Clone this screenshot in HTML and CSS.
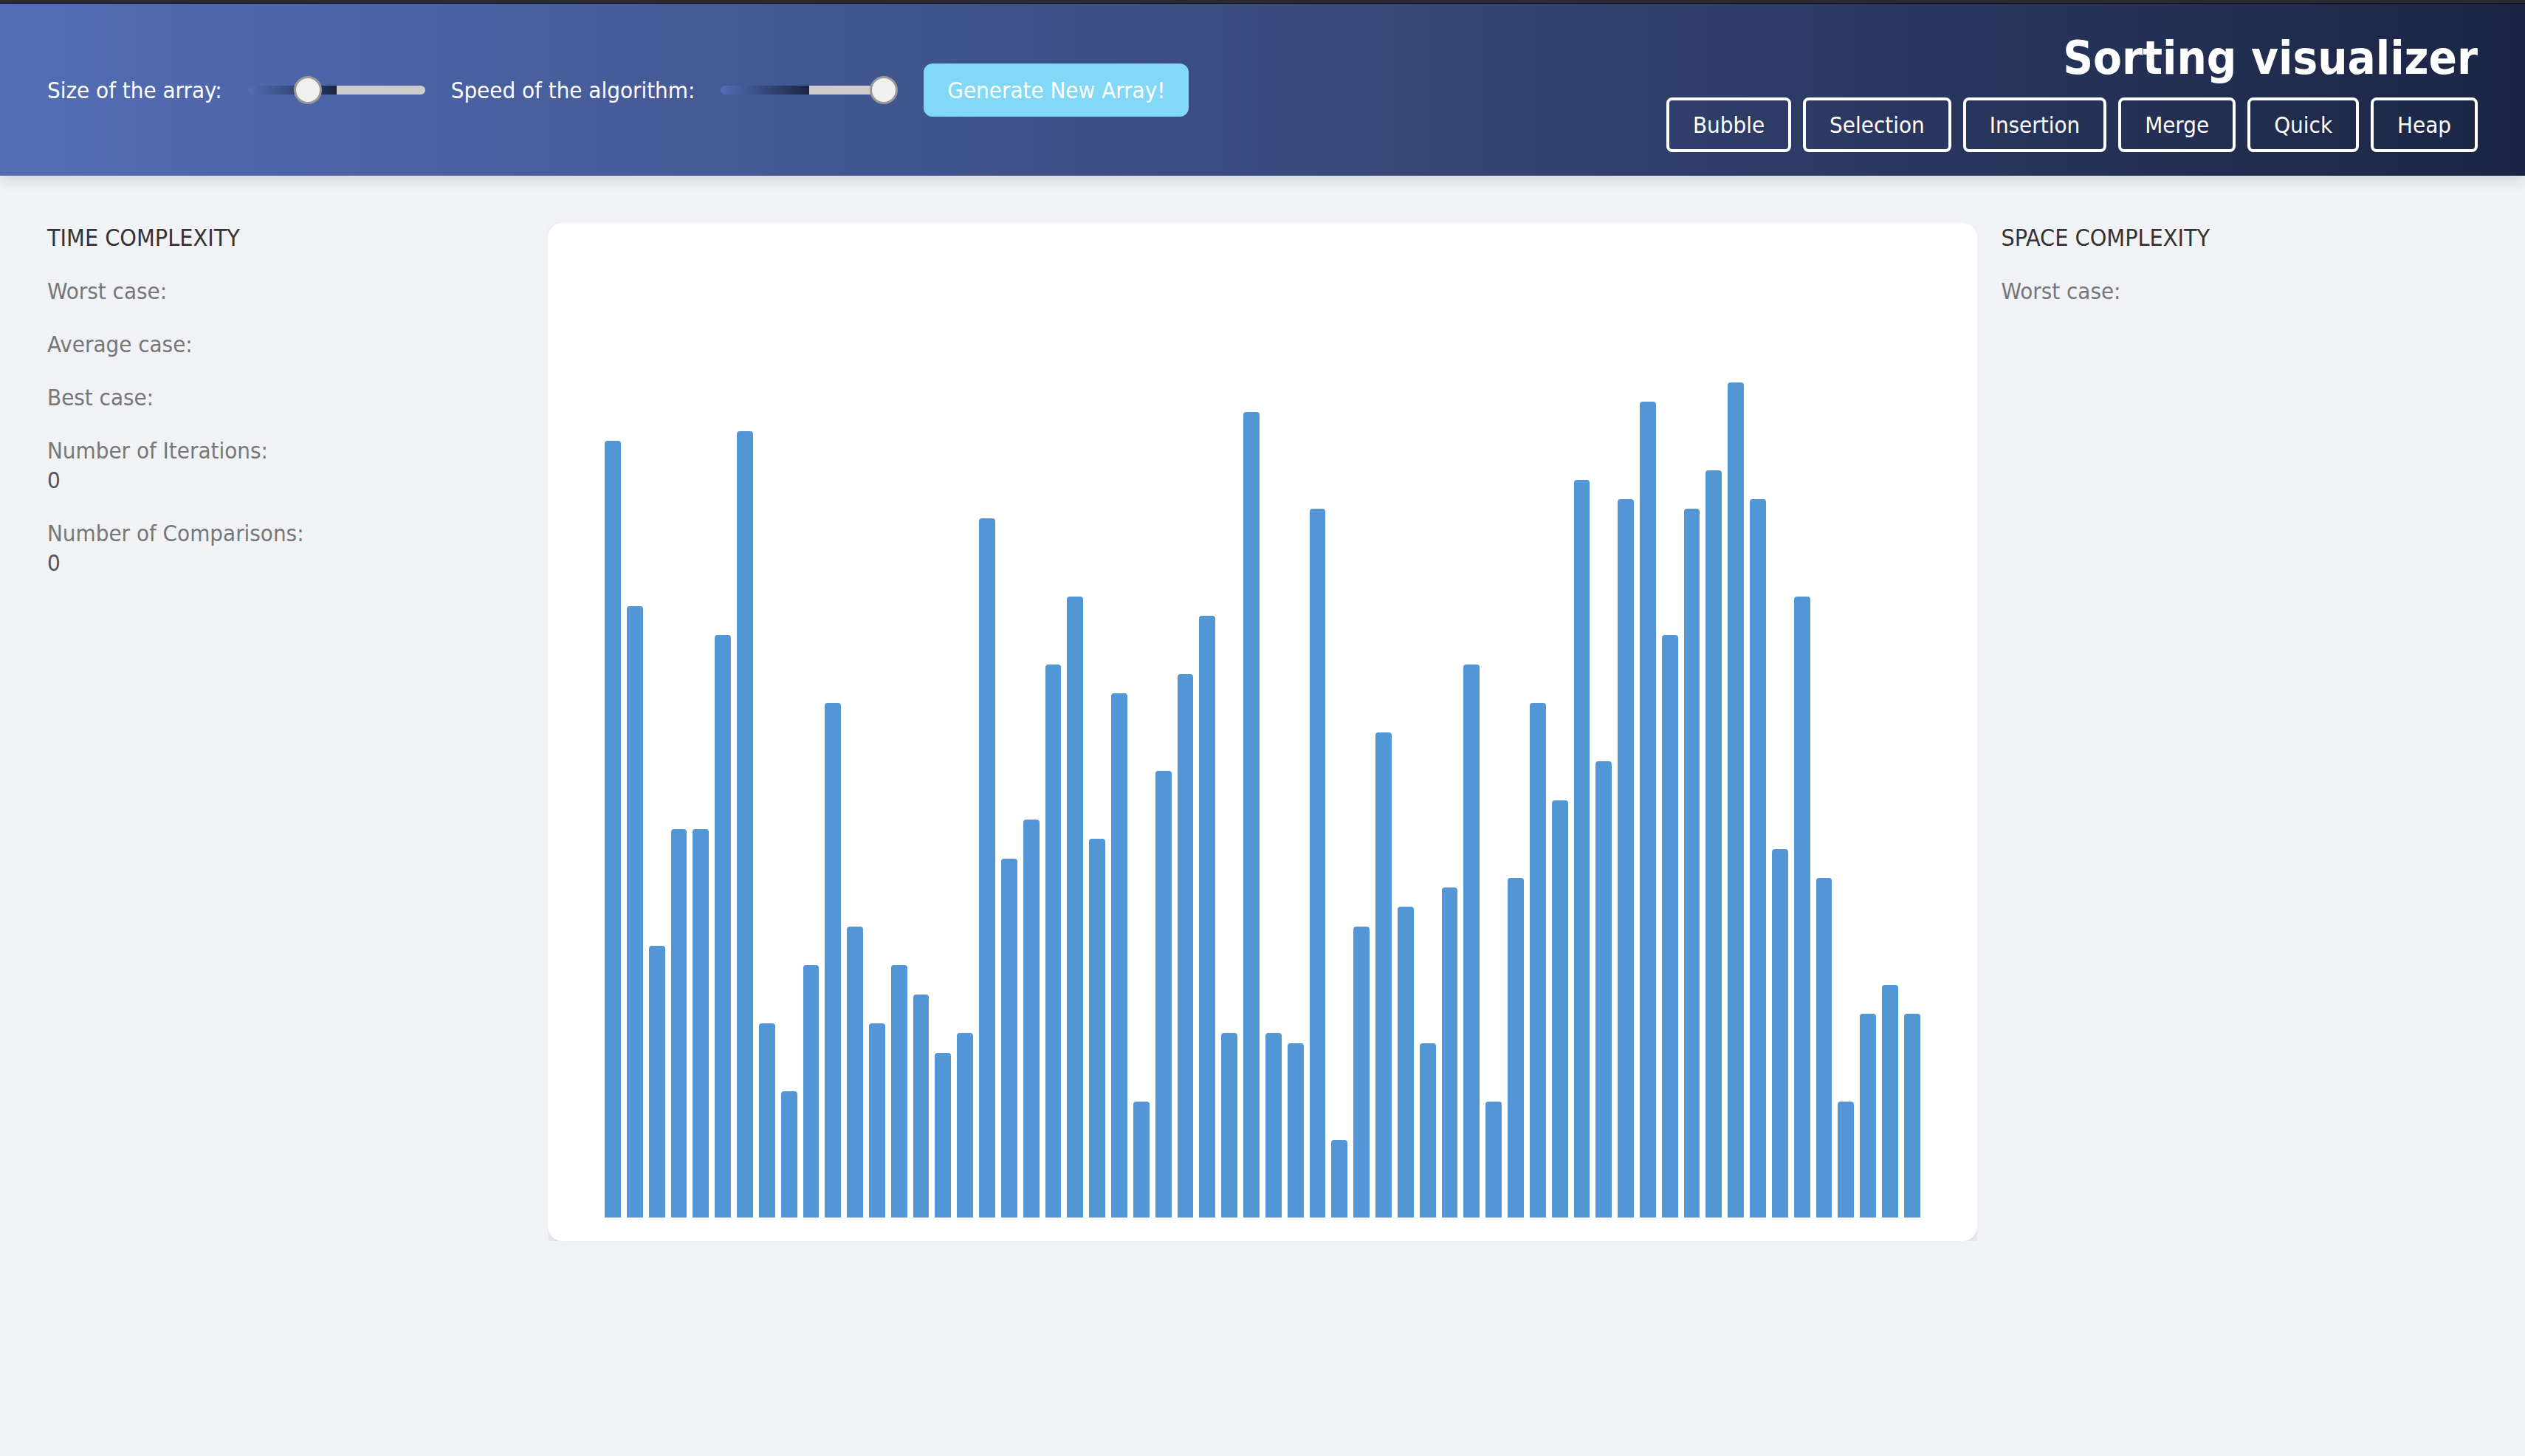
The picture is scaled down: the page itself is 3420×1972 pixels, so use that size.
FILE: index.html
```html
<!DOCTYPE html>
<html lang="en">
<head>
<meta charset="utf-8">
<meta name="viewport" content="width=device-width, initial-scale=1">
<title>Sorting visualizer</title>
<link rel="stylesheet" href="styles.css">
</head>
<body>
<header class="header">
  <div class="controls">
    <label for="size">Size of the array:</label>
    <input class="slider" id="size" type="range" min="20" max="150" value="60">
    <label for="speed">Speed of the algorithm:</label>
    <input class="slider" id="speed" type="range" min="1" max="100" value="100">
    <button class="generate" id="generate" type="button">Generate New Array!</button>
  </div>
  <div class="brand">
    <h1 class="title">Sorting visualizer</h1>
    <nav class="algorithms">
      <button class="algorithm" type="button">Bubble</button>
      <button class="algorithm" type="button">Selection</button>
      <button class="algorithm" type="button">Insertion</button>
      <button class="algorithm" type="button">Merge</button>
      <button class="algorithm" type="button">Quick</button>
      <button class="algorithm" type="button">Heap</button>
    </nav>
  </div>
</header>
<main class="layout">
  <aside class="info">
    <h2 class="info-title">TIME COMPLEXITY</h2>
    <p>Worst case:</p>
    <p>Average case:</p>
    <p>Best case:</p>
    <p>Number of Iterations:<span class="count">0</span></p>
    <p>Number of Comparisons:<span class="count">0</span></p>
  </aside>
  <section class="stage">
    <div class="bars" id="bars"></div>
  </section>
  <aside class="info">
    <h2 class="info-title">SPACE COMPLEXITY</h2>
    <p>Worst case:</p>
  </aside>
</main>
<script src="script.js"></script>
</body>
</html>
```
FILE: styles.css
```css
* {
  box-sizing: border-box;
  margin: 0;
  padding: 0;
}

body {
  min-height: 100vh;
  border-top: 4px solid #2b2a33;
  background: #f0f2f5;
  color: #777;
  font-family: "DejaVu Sans Condensed", "DejaVu Sans", Tahoma, sans-serif;
  font-size: 31px;
  line-height: 40px;
}

button {
  font: inherit;
  color: #fff;
  cursor: pointer;
}

.header {
  display: flex;
  flex-wrap: wrap;
  align-items: center;
  justify-content: space-between;
  gap: 32px;
  padding: 32px 64px;
  border-top: 1px solid #0c0c0d;
  background: linear-gradient(to right, #536db5, #394b7e, #1b2543);
  box-shadow: 0 8px 16px rgba(0, 0, 0, 0.1);
  color: #fff;
}

.controls {
  display: flex;
  flex-wrap: wrap;
  align-items: center;
  gap: 35px;
}

.slider {
  appearance: none;
  width: 240px;
  height: 12px;
  border-radius: 6px;
  background: linear-gradient(to right, #536db5, #1b2543 50%, #ccc 50%);
}

.slider::-webkit-slider-thumb {
  appearance: none;
  width: 38px;
  height: 38px;
  border: 3px solid #999;
  border-radius: 50%;
  background: #f0f0f0;
}

.generate {
  padding: 16px 32px;
  border: 0;
  border-radius: 12px;
  background: #81d8f7;
}

.brand {
  display: flex;
  flex-direction: column;
  align-items: flex-end;
  gap: 12px;
}

.title {
  font-size: 63px;
  line-height: 83px;
}

.algorithms {
  display: flex;
  flex-wrap: wrap;
  gap: 16px;
}

.algorithm {
  padding: 16px 32px;
  border: 4px solid #fff;
  border-radius: 8px;
  background: transparent;
  line-height: 34px;
}

.layout {
  display: grid;
  grid-template-columns: 1fr 3fr 1fr;
  align-items: start;
  gap: 32px;
  padding: 64px;
}

.info {
  display: flex;
  flex-direction: column;
  gap: 32px;
}

.info-title {
  color: #333;
  font-size: 32px;
  font-weight: 400;
}

.count {
  display: block;
  color: #555;
}

.stage {
  overflow: hidden;
}

.bars {
  display: flex;
  align-items: flex-end;
  gap: 8px;
  height: calc(70vh - 1px);
  padding: 32px 4%;
  border-radius: 20px;
  background: #fff;
  box-shadow: 0 8px 16px rgba(0, 0, 0, 0.1);
}

.bar {
  flex: 1;
  border-radius: 4px 4px 0 0;
  background: #5296d5;
}
```
FILE: script.js
```js
const values = [
  80, 63, 28, 40, 40, 60, 81, 20, 13, 26, 53, 30, 20, 26, 23, 17, 19, 72, 37, 41,
  57, 64, 39, 54, 12, 46, 56, 62, 19, 83, 19, 18, 73, 8, 30, 50, 32, 18, 34, 57,
  12, 35, 53, 43, 76, 47, 74, 84, 60, 73, 77, 86, 74, 38, 64, 35, 12, 21, 24, 21
];

const bars = document.getElementById("bars");

function draw(list) {
  bars.replaceChildren(...list.map((value) => {
    const bar = document.createElement("div");
    bar.className = "bar";
    bar.style.height = value + "%";
    return bar;
  }));
}

document.getElementById("generate").addEventListener("click", () => {
  const size = Number(document.getElementById("size").value);
  draw(Array.from({ length: size }, () => 8 + Math.floor(Math.random() * 80)));
});

draw(values);
```
